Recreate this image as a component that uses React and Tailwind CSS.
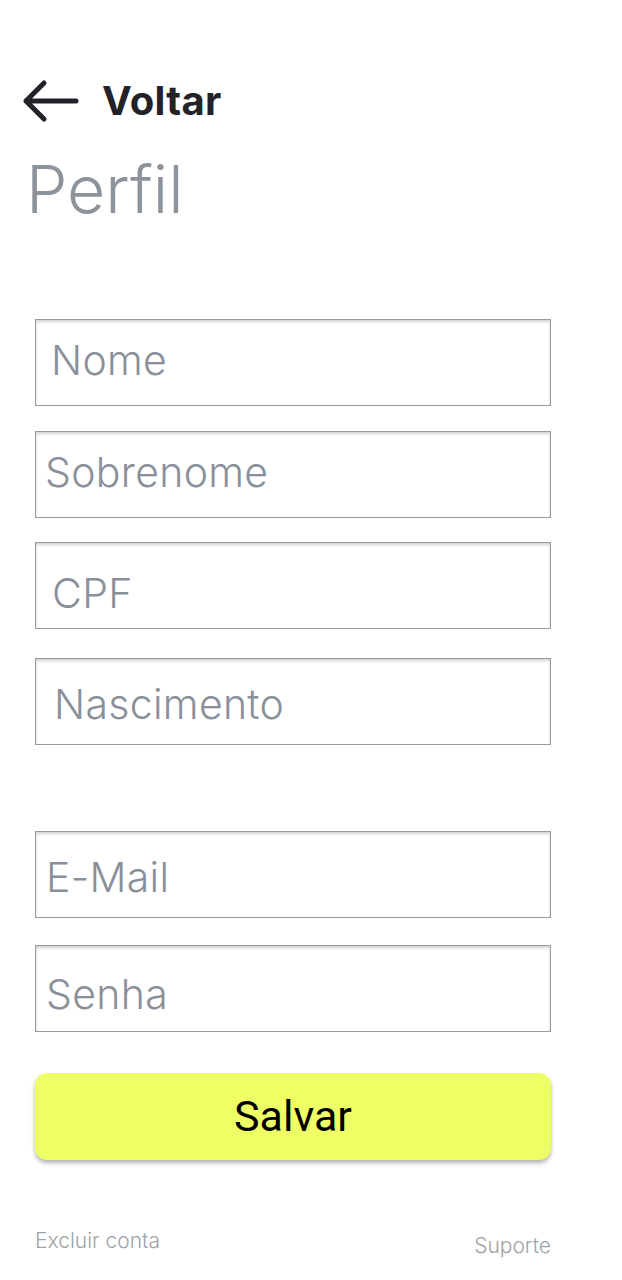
import React from 'react';

const fields = [
  { label: 'Nome', pad: 'pt-[20px] pl-[15px]', gap: 'mt-[97px]' },
  { label: 'Sobrenome', pad: 'pt-[20px] pl-[9px]', gap: 'mt-[25px]' },
  { label: 'CPF', pad: 'pt-[30px] pl-[16px]', gap: 'mt-[24px]' },
  { label: 'Nascimento', pad: 'pt-[25px] pl-[18px]', gap: 'mt-[29px]' },
  { label: 'E-Mail', pad: 'pt-[25px] pl-[10px]', gap: 'mt-[86px]' },
  { label: 'Senha', pad: 'pt-[28px] pl-[10px]', gap: 'mt-[27px]' },
];

const App = () => {
  return (
    <div className="min-h-[1280px] bg-white font-['Inter',sans-serif]">
      <div className="flex items-center pl-[22px] pt-[79px]">
        <svg width="58" height="44" viewBox="0 0 58 44" fill="none">
          <path
            d="M54 22H4M22 4L4 22l18 18"
            stroke="#222228"
            strokeWidth="5"
            strokeLinecap="round"
            strokeLinejoin="round"
          />
        </svg>
        <span className="ml-[22px] text-[40px] leading-none font-bold tracking-[0.3px] text-[#222228]">Voltar</span>
      </div>

      <h1 className="mt-[33px] pl-[26px] text-[66px] leading-none font-light text-[#8d939b]">Perfil</h1>

      <div className="px-[35px] w-[586px]">
        {fields.map((f) => (
          <div
            key={f.label}
            className={`${f.gap} h-[87px] border border-[#9a9a9a] shadow-[inset_0_2px_3px_rgba(0,0,0,0.18)] ${f.pad}`}
          >
            <span className="block text-[41px] leading-none font-light tracking-[0.3px] text-[#8a9099]">{f.label}</span>
          </div>
        ))}

        <button className="mt-[41px] w-full h-[87px] rounded-[12px] bg-[#eeff66] shadow-[0_3px_4px_rgba(0,0,0,0.3)] font-['Roboto',sans-serif] text-[43px] leading-none text-black">
          Salvar
        </button>

        <div className="mt-[70px] flex justify-between items-start text-[21px] leading-none font-light text-[#9ea3a8]">
          <span>Excluir conta</span>
          <span className="mt-[5px]">Suporte</span>
        </div>
      </div>
    </div>
  );
};

export default App;
